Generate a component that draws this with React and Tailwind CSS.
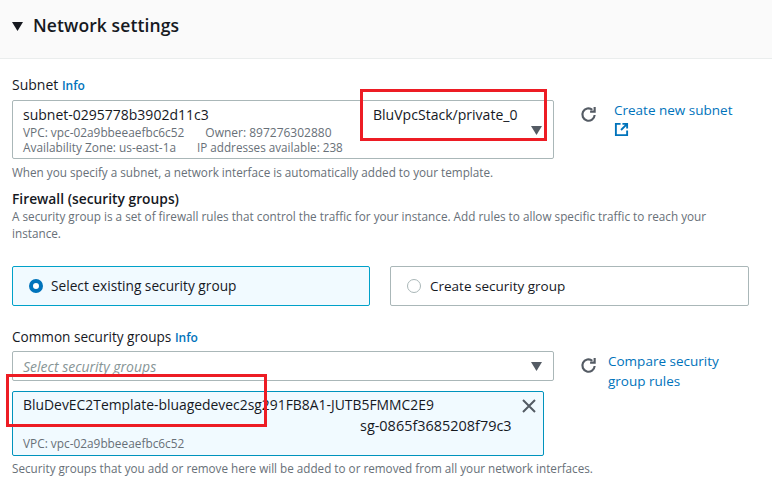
import React from "react";

const F = { fontFamily: '"Open Sans", "Noto Sans", sans-serif' };

function Refresh() {
  return (
    <svg width="17" height="17" viewBox="0 0 16 16" fill="none" stroke="#545b64" strokeWidth="2" className="shrink-0">
      <path d="M13.8 8.5A5.8 5.8 0 1 1 11.6 3.5" />
      <path d="M13.8 1v4.3H9.5" />
    </svg>
  );
}

function Caret({ className = "" }) {
  return (
    <svg width="11" height="9" viewBox="0 0 11 9" className={className}>
      <path d="M0 0h11L5.5 9z" fill="#545b64" />
    </svg>
  );
}

export default function App() {
  return (
    <div className="relative w-[772px] h-[489px] overflow-hidden bg-white text-[#16191f] text-[13.6px]" style={F}>
      <div className="h-[59px] bg-[#fafafa] border-b border-[#eaeded] flex items-center pl-3 pb-[6px] gap-[10px]">
        <svg width="11" height="9" viewBox="0 0 11 9"><path d="M0 0h11L5.5 9z" fill="#16191f" /></svg>
        <h2 className="text-[17.5px] font-semibold leading-none tracking-[0.1px]">Network settings</h2>
      </div>

      <div className="pl-3 pt-[17px]">
        <div className="leading-[18px] h-[24px] text-[14px]">
          Subnet <span className="text-[12px] font-semibold text-[#0073bb]">Info</span>
        </div>
        <div className="flex items-start">
          <div className="relative w-[542px] h-[59px] border border-[#aab7b8] rounded-[2px] pl-[10px] pt-[5px]">
            <div className="leading-[18px] text-[14px]">subnet-0295778b3902d11c3</div>
            <div className="text-[11.85px] leading-[15px] text-[#687078] flex gap-[21px] mt-[1px]">
              <span>VPC: vpc-02a9bbeeaefbc6c52</span>
              <span className="text-[12px]">Owner: 897276302880</span>
            </div>
            <div className="text-[11.85px] leading-[15px] text-[#687078] flex gap-[21px]">
              <span>Availability Zone: us-east-1a</span>
              <span className="text-[11.7px]">IP addresses available: 238</span>
            </div>
            <span className="absolute left-[360px] top-[5px] leading-[18px] text-[14.05px]">BluVpcStack/private_0</span>
            <Caret className="absolute right-[11px] top-[25px]" />
          </div>
          <div className="ml-[26px] mt-[6px]"><Refresh /></div>
          <div className="ml-[17px] text-[#0073bb] leading-[21px] text-[13.5px]">
            <div>Create new subnet</div>
            <svg width="15" height="15" viewBox="0 0 16 16" fill="none" stroke="#0073bb" strokeWidth="2" className="mt-[1px]">
              <path d="M7 2H2v12h12V9" />
              <path d="M9 2h5v5M14 2 7.5 8.5" />
            </svg>
          </div>
        </div>
        <p className="text-[11.72px] leading-[15px] text-[#687078] mt-[6px]">
          When you specify a subnet, a network interface is automatically added to your template.
        </p>

        <h3 className="font-semibold text-[13.8px] leading-[18px] mt-[10px]">Firewall (security groups)</h3>
        <p className="text-[11.74px] leading-[17px] text-[#687078] w-[720px]">
          A security group is a set of firewall rules that control the traffic for your instance. Add rules to allow specific traffic to reach your instance.
        </p>

        <div className="flex gap-[20px] mt-[24px]">
          <div className="w-[358px] h-[40px] border border-[#00a1c9] rounded-[2px] bg-[#f1faff] flex items-center pl-[16px] gap-[8px]">
            <span className="w-[14px] h-[14px] rounded-full border-[4px] border-[#0073bb] bg-white" />
            <span className="text-[13.7px]">Select existing security group</span>
          </div>
          <div className="w-[359px] h-[40px] border border-[#aab7b8] rounded-[2px] flex items-center pl-[16px] gap-[9px]">
            <span className="w-[14px] h-[14px] rounded-full border border-[#aab7b8] bg-white" />
            <span className="text-[13.5px]">Create security group</span>
          </div>
        </div>

        <div className="leading-[18px] h-[23px] mt-[22px]">
          Common security groups <span className="text-[12px] font-semibold text-[#0073bb]">Info</span>
        </div>
        <div className="flex items-start h-[30px]">
          <div className="w-[542px] h-[30px] border border-[#aab7b8] rounded-[2px] flex items-center justify-between pl-[10px] pr-[11px]">
            <span className="italic text-[#879596] text-[14px]">Select security groups</span>
            <Caret />
          </div>
          <div className="ml-[26px] mt-[6px]"><Refresh /></div>
          <div className="ml-[11px] text-[#0073bb] leading-[20px] w-[130px] text-[13.5px]">Compare security group rules</div>
        </div>
        <div className="relative w-[532px] h-[65px] mt-[10px] border border-[#0093bd] rounded-[2px] bg-[#f1faff] pl-[10px] pt-[4px]">
          <div className="leading-[18px] text-[13.9px]">BluDevEC2Template-bluagedevec2sg291FB8A1-JUTB5FMMC2E9</div>
          <div className="leading-[18px] pl-[337px] mt-[3px] text-[14.45px]">sg-0865f3685208f79c3</div>
          <div className="text-[11.85px] leading-[15px] text-[#687078] mt-[1px]">VPC: vpc-02a9bbeeaefbc6c52</div>
          <svg width="14" height="14" viewBox="0 0 14 14" stroke="#545b64" strokeWidth="2" className="absolute right-[7px] top-[7px]">
            <path d="M1 1l12 12M13 1 1 13" />
          </svg>
        </div>
        <p className="text-[11.7px] leading-[15px] text-[#687078] mt-[5px]">
          Security groups that you add or remove here will be added to or removed from all your network interfaces.
        </p>
      </div>

      <div className="absolute left-[360px] top-[89px] w-[187px] h-[52px] border-[3px] border-[#ed1c24]" />
      <div className="absolute left-[6px] top-[374px] w-[261px] h-[53px] border-[3px] border-[#ed1c24]" />
    </div>
  );
}
